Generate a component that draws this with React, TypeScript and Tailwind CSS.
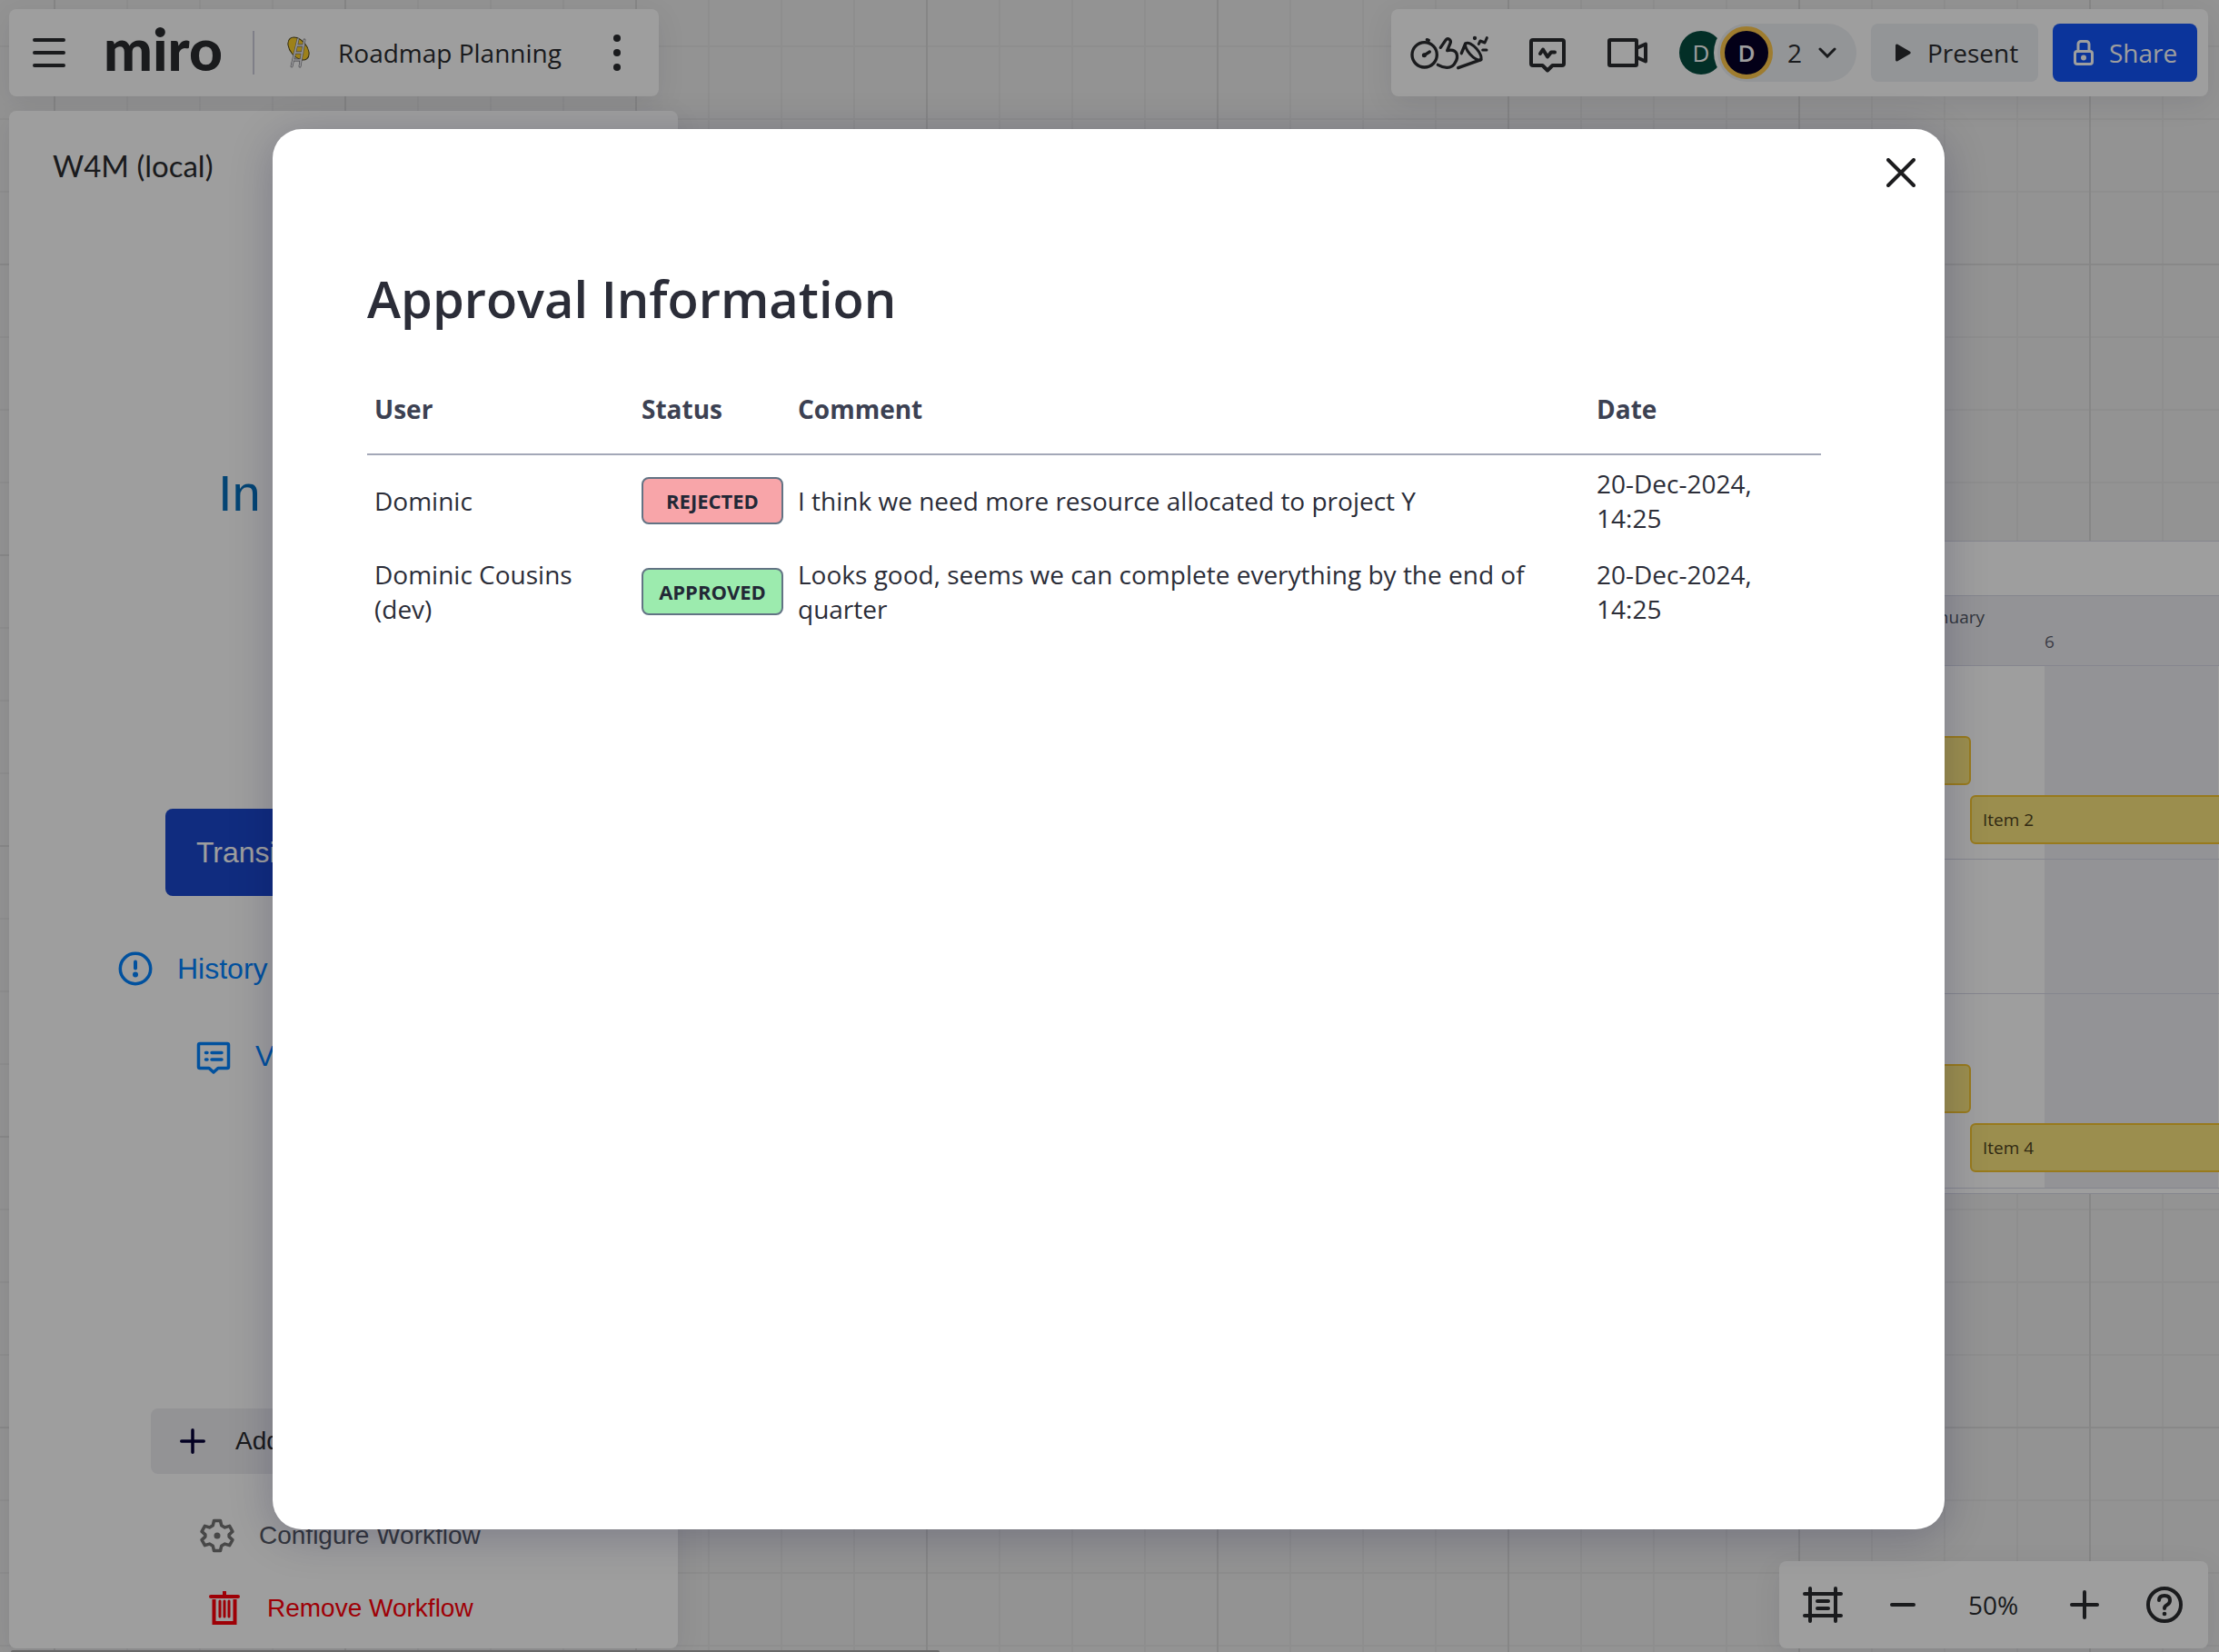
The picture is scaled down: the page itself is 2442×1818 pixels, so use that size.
import { ReactNode } from "react";

type Approval = {
  user: string;
  status: "REJECTED" | "APPROVED";
  comment: string;
  date: string;
};

const approvals: Approval[] = [
  {
    user: "Dominic",
    status: "REJECTED",
    comment: "I think we need more resource allocated to project Y",
    date: "20-Dec-2024, 14:25",
  },
  {
    user: "Dominic Cousins (dev)",
    status: "APPROVED",
    comment:
      "Looks good, seems we can complete everything by the end of quarter",
    date: "20-Dec-2024, 14:25",
  },
];

const statusColors = {
  REJECTED: "bg-[#f8a5a9]",
  APPROVED: "bg-[#9cebae]",
};

const MenuIcon = () => (
  <svg width="36" height="32" viewBox="0 0 36 32" stroke="currentColor" strokeWidth="4" strokeLinecap="round">
    <path d="M2 2h32M2 16h32M2 30h32" />
  </svg>
);

const LadderIcon = () => (
  <svg width="26" height="36" viewBox="0 0 26 36" fill="none">
    <ellipse cx="12.500" cy="13.500" rx="14.500" ry="9" transform="rotate(50 12.500 13.500)" fill="#fdd12a" stroke="#4a4014" strokeWidth="1" />
    <g stroke="#6b6b73" strokeWidth="2.800" strokeLinecap="round">
      <path d="M12 3L5 33M19 4L14 33M11.500 10h7M9.500 18h7.500M8 26h7.500" />
    </g>
    <g stroke="#f0f0f4" strokeWidth="1.600" strokeLinecap="round">
      <path d="M12 3L5 33M19 4L14 33M11.500 10h7M9.500 18h7.500M8 26h7.500" />
    </g>
  </svg>
);

const DotsIcon = () => (
  <svg width="8" height="40" viewBox="0 0 8 40" fill="currentColor">
    <circle cx="4" cy="4" r="4" />
    <circle cx="4" cy="20" r="4" />
    <circle cx="4" cy="36" r="4" />
  </svg>
);

const ReactionsIcon = () => (
  <svg width="90" height="42" viewBox="60 78 270 126" fill="none" stroke="currentColor" strokeWidth="10" strokeLinecap="round" strokeLinejoin="round">
    <circle cx="113" cy="148" r="41" />
    <path d="M121 98l6 2M113 149l17-11" />
    <circle cx="112" cy="149" r="5" fill="currentColor" strokeWidth="5" />
    <path d="M166 124l18-26q7-6 12 0 5 5 2 12l-10 24q24-6 31 10 5 14-4 28-8 18-28 18-14 0-30-9" />
    <path d="M235 143l13-32M300 164l-76 27" />
    <ellipse cx="274" cy="137" rx="36" ry="14" transform="rotate(48 274 137)" strokeWidth="9" />
    <path d="M292 112l5-10 15 6 7-16M305 132h13" strokeWidth="9" />
    <circle cx="279" cy="93" r="3" fill="currentColor" strokeWidth="7" />
  </svg>
);

const ActivityIcon = () => (
  <svg width="40" height="38" viewBox="0 0 40 38" fill="none" stroke="currentColor" strokeWidth="4" strokeLinejoin="round" strokeLinecap="round">
    <path d="M2 4a2 2 0 0 1 2-2h32a2 2 0 0 1 2 2v24a2 2 0 0 1-2 2H25.500L20 35.500 14.500 30H4a2 2 0 0 1-2-2z" />
    <path d="M12 17l3-4.500 5 8 4-5h4" />
  </svg>
);

const VideoIcon = () => (
  <svg width="44" height="32" viewBox="0 0 44 32" fill="none" stroke="currentColor" strokeWidth="4" strokeLinejoin="round">
    <rect x="2" y="2" width="30" height="28" rx="1" />
    <path d="M33 10.500l9-4v19l-9-4" />
  </svg>
);

const LockIcon = () => (
  <svg width="22" height="28" viewBox="0 0 22 28" fill="none" stroke="currentColor" strokeWidth="3">
    <rect x="1.500" y="12.500" width="19" height="14" rx="2.500" />
    <path d="M5 12V4.500a3 3 0 0 1 3-3h6a3 3 0 0 1 3 3V12" />
    <circle cx="11" cy="19.500" r="3" fill="currentColor" stroke="none" />
  </svg>
);

const HistoryIcon = () => (
  <svg width="38" height="38" viewBox="0 0 38 38" fill="none" stroke="currentColor" strokeWidth="3.500" strokeLinecap="round">
    <circle cx="19" cy="19" r="16.700" />
    <path d="M19 11.500v7" strokeWidth="4" />
    <circle cx="19" cy="25.500" r="3" fill="currentColor" stroke="none" />
  </svg>
);

const CommentIcon = () => (
  <svg width="38" height="42" viewBox="0 -4 38 42" fill="none" stroke="currentColor" strokeWidth="3.500" strokeLinecap="round" strokeLinejoin="round">
    <path d="M2.500 5a1.500 1.500 0 0 1 1.500-1.500h30A1.500 1.500 0 0 1 35.500 5v24a1.500 1.500 0 0 1-1.500 1.500H24l-5 4.500-5-4.500H4A1.500 1.500 0 0 1 2.500 29z" />
    <path d="M10.500 13.500h1.500M17 13.500h11M10.500 21h1.500M17 21h11" />
  </svg>
);

const GearIcon = () => (
  <svg width="38" height="38" viewBox="0 0 38 38" fill="none" stroke="#747474" strokeWidth="3.500" strokeLinejoin="round">
    <path d="M15.500 2.500h7l1.200 5.200 3.800 2.200 5.100-1.500 3.300 6-3.800 3.500v2.200l3.800 3.500-3.300 6-5.100-1.500-3.800 2.200-1.200 5.200h-7l-1.200-5.200-3.800-2.200-5.100 1.500-3.300-6 3.800-3.500v-2.200l-3.800-3.500 3.300-6 5.100 1.500 3.800-2.200z" />
    <circle cx="19" cy="19" r="3.500" fill="#747474" stroke="none" />
  </svg>
);

const TrashIcon = () => (
  <svg width="34" height="38" viewBox="0 0 34 38" fill="none" stroke="currentColor" strokeWidth="4">
    <path d="M2 6h30" strokeLinecap="round" />
    <path d="M17 1v5" strokeLinecap="round" />
    <path d="M5.500 9v26h23V9" />
    <path d="M12 11v17M17 11v17M22 11v17" strokeWidth="3" strokeLinecap="round" />
  </svg>
);

const FrameIcon = () => (
  <svg width="44" height="40" viewBox="0 0 44 40" fill="none" stroke="currentColor" strokeWidth="4" strokeLinecap="round">
    <path d="M2 8h40M2 32h40M8 2v36M36 2v36M16 16h12M16 24h12" />
  </svg>
);

const PlusIcon = ({ size }: { size: number }) => (
  <svg width={size} height={size} viewBox="0 0 32 32" stroke="currentColor" strokeWidth="4" strokeLinecap="round">
    <path d="M2 16h28M16 2v28" />
  </svg>
);

const HelpIcon = () => (
  <svg width="40" height="40" viewBox="0 0 40 40" fill="none" stroke="currentColor" strokeWidth="4" strokeLinecap="round">
    <circle cx="20" cy="20" r="18" />
    <path d="M14 15q0-5 6-5t6 5q0 3.500-3 5t-3 4" />
    <circle cx="20" cy="30" r="2.300" fill="currentColor" stroke="none" />
  </svg>
);

const Bar = ({ children, className }: { children: ReactNode; className: string }) => (
  <div
    className={`flex h-24 items-center rounded-lg bg-white shadow-[0_8px_32px_rgba(5,0,56,0.08)] ${className}`}>
    {children}
  </div>
);

const TopBar = () => {
  return (
    <header className="flex justify-between">
      <Bar className="w-[715px] pl-[26px] pr-[42px]">
        <button aria-label="Main menu">
          <MenuIcon />
        </button>
        <a href="#" className="ml-[42px] w-[132px] pb-2 font-[Lato,sans-serif] text-[64px] leading-[64px] font-black">
          miro
        </a>
        <div className="ml-[32px] h-12 w-[2px] bg-[#cdcddb]" />
        <div className="ml-[36px]">
          <LadderIcon />
        </div>
        <h1 className="ml-[30px] text-[28px]">Roadmap Planning</h1>
        <button aria-label="Board options" className="ml-auto">
          <DotsIcon />
        </button>
      </Bar>
      <Bar className="pl-[19px] pr-3">
        <button aria-label="Reactions">
          <ReactionsIcon />
        </button>
        <button aria-label="Activity" className="ml-[43px] pt-[6px]">
          <ActivityIcon />
        </button>
        <button aria-label="Video call" className="ml-[46px]">
          <VideoIcon />
        </button>
        <span className="ml-[35px] flex size-12 items-center justify-center rounded-full bg-[#054d40] text-[26px] font-medium text-white">
          D
        </span>
        <button className="-ml-[6px] flex h-16 w-[153px] items-center rounded-full bg-[#edf0f4] pl-[3px] text-[28px] ring-4 ring-white">
          <span className="flex size-[58px] items-center justify-center rounded-full border-[5px] border-[#ffc94c] bg-[#050028] text-[26px] font-semibold text-white">
            D
          </span>
          <span className="ml-4">2</span>
          <svg className="ml-[18px]" width="20" height="12" viewBox="0 0 20 12" fill="none" stroke="currentColor" strokeWidth="3" strokeLinecap="round">
            <path d="M2 2l8 8 8-8" />
          </svg>
        </button>
        <button className="ml-4 flex h-16 w-[184px] items-center rounded-lg bg-[#edf0f4] pl-[27px] text-[28px]">
          <svg width="17" height="20" viewBox="0 0 17 20" fill="currentColor">
            <path d="M0 2a1.500 1.500 0 0 1 2.300-1.300L16 8.800a1.400 1.400 0 0 1 0 2.400L2.300 19.300A1.500 1.500 0 0 1 0 18z" />
          </svg>
          <span className="ml-[18px]">Present</span>
        </button>
        <button className="ml-4 flex h-16 w-[159px] items-center rounded-lg bg-[#1255fa] pl-[23px] text-[28px] text-white">
          <LockIcon />
          <span className="ml-[17px]">Share</span>
        </button>
      </Bar>
    </header>
  );
};

const WorkflowPanel = () => {
  return (
    <aside className="flex w-[736px] flex-col rounded-lg bg-white pt-10 pb-6 font-['Liberation_Sans',sans-serif] shadow-[0_8px_32px_rgba(5,0,56,0.08)]">
      <h2 className="pl-12 font-[Lato,sans-serif] text-[33px] leading-10">
        W4M (local)
      </h2>
      <p className="mt-[309px] pl-[230px] text-[56px] leading-[64px] text-[#066fbb]">
        In
      </p>
      <button className="mx-auto mt-[315px] h-24 w-[392px] rounded-lg bg-[#1a47cd] pl-[34px] text-left text-[32px] text-white">
        Transition
      </button>
      <button className="mt-[60px] flex h-10 items-center gap-[27px] pl-[120px] text-[32px] text-[#0383ff]">
        <HistoryIcon />
        History
      </button>
      <button className="mt-[56px] flex h-10 items-center gap-[27px] pl-[206px] text-[32px] text-[#0383ff]">
        <CommentIcon />
        View
      </button>
      <button className="mx-auto mt-auto flex h-[72px] w-[424px] items-center gap-[33px] rounded-lg bg-[#ededf1] pl-[32px] text-[28px]">
        <span className="text-[#050038]">
          <PlusIcon size={28} />
        </span>
        Add
      </button>
      <button className="mt-12 flex h-10 items-center gap-[27px] pl-[210px] text-[28px] text-[#555a64]">
        <GearIcon />
        Configure Workflow
      </button>
      <button className="mt-10 flex h-10 items-center gap-[30px] pl-[220px] text-[28px] text-[#ff000a]">
        <TrashIcon />
        Remove Workflow
      </button>
    </aside>
  );
};

const TimelineItem = ({ label, className }: { label?: string; className: string }) => (
  <div
    className={`h-[54px] rounded-md border-2 border-[#f5c52f] bg-[#fae67e] pl-3 text-[19px] leading-[50px] text-[#504320] ${className}`}>
    {label}
  </div>
);

const Timeline = () => {
  return (
    <section className="absolute top-[595px] right-0 left-[1700px] border-y border-[#d7d8e6] bg-white pt-[59px] pb-[5px]">
      <div className="h-[78px] border-y border-[#d7d8e6] bg-[#eeeef2] pt-[10px] text-[19px] leading-[27px]">
        <p className="w-[484px] text-right font-medium text-[#525765]">
          January
        </p>
        <p className="pl-[550px] text-[#5f6270]">6</p>
      </div>
      <div className="bg-[linear-gradient(#eeeef2,#eeeef2)] bg-[length:191px_100%] bg-[position:550px_0] bg-no-repeat">
        <div className="h-[213px] border-b border-[#d7d8e6] pt-[77px]">
          <TimelineItem className="w-[469px]" />
          <TimelineItem label="Item 2" className="mt-[11px] -mr-4 ml-[468px]" />
        </div>
        <div className="h-[148px] border-b border-[#d7d8e6]" />
        <div className="h-[214px] border-b border-[#d7d8e6] pt-[77px]">
          <TimelineItem className="w-[469px]" />
          <TimelineItem label="Item 4" className="mt-[11px] -mr-4 ml-[468px]" />
        </div>
      </div>
    </section>
  );
};

const ZoomBar = () => {
  return (
    <Bar className="w-[472px] self-end pl-[26px]">
      <button aria-label="Frames">
        <FrameIcon />
      </button>
      <button aria-label="Zoom out" className="ml-[52px] h-1 w-7 rounded-full bg-[#2a2c30]" />
      <span className="ml-[58px] text-[28px] font-medium">50%</span>
      <button aria-label="Zoom in" className="ml-[57px]">
        <PlusIcon size={32} />
      </button>
      <button aria-label="Help" className="ml-[52px]">
        <HelpIcon />
      </button>
    </Bar>
  );
};

const ApprovalModal = () => {
  return (
    <div className="absolute inset-0 flex bg-black/38 pt-[142px] pr-[302px] pb-[135px] pl-[300px]">
      <div
        role="dialog"
        aria-labelledby="approval-title"
        className="relative flex-1 rounded-[32px] bg-white pt-[148px] pr-[136px] pl-[104px] text-[#2b2d38] shadow-[0_8px_48px_rgba(5,0,56,0.22)]">
        <button aria-label="Close" className="absolute top-8 right-8 text-[#1c1c1e]">
          <svg width="32" height="32" viewBox="0 0 32 32" stroke="currentColor" strokeWidth="4" strokeLinecap="round">
            <path d="M2 2l28 28M30 2L2 30" />
          </svg>
        </button>
        <h2 id="approval-title" className="text-[56px] leading-[76px] font-semibold">
          Approval Information
        </h2>
        <table className="mt-[34px] w-full table-fixed border-separate border-spacing-0 text-left text-[28px] leading-[38px]">
          <thead className="text-[#3c4152]">
            <tr className="h-[101px]">
              <th className="w-[294px] border-b-2 border-[#a3a8b8] px-2">User</th>
              <th className="w-[172px] border-b-2 border-[#a3a8b8] px-2">Status</th>
              <th className="border-b-2 border-[#a3a8b8] px-2">Comment</th>
              <th className="w-[255px] border-b-2 border-[#a3a8b8] px-2">Date</th>
            </tr>
          </thead>
          <tbody>
            {approvals.map((item) => (
              <tr key={item.user}>
                <td className="px-2 py-3">{item.user}</td>
                <td className="px-2 py-3">
                  <div
                    className={`flex h-[52px] items-center justify-center rounded-lg border-2 border-[#627384] text-[22px] font-bold text-[#222836] ${statusColors[item.status]}`}>
                    {item.status}
                  </div>
                </td>
                <td className="px-2 py-3">{item.comment}</td>
                <td className="px-2 py-3">{item.date}</td>
              </tr>
            ))}
          </tbody>
        </table>
      </div>
    </div>
  );
};

export default function App() {
  return (
    <div className="relative h-screen overflow-hidden bg-[#ededed] font-['Open_Sans',sans-serif] text-[#2a2c30]">
      {/* board grid, every fourth line is darker */}
      <div className="absolute inset-0 bg-[linear-gradient(90deg,#e5e5e5_2px,transparent_2px),linear-gradient(#e5e5e5_2px,transparent_2px)] bg-[size:80px_80px] bg-[position:59px_50px]" />
      <div className="absolute inset-0 bg-[linear-gradient(90deg,#d8d8d8_2px,transparent_2px),linear-gradient(#dcdcdc_2px,transparent_2px)] bg-[size:320px_320px] bg-[position:59px_290px]" />
      <Timeline />
      <div className="relative flex h-full flex-col gap-4 pt-[10px] pr-3 pb-1 pl-[10px]">
        <TopBar />
        <main className="flex flex-1 justify-between">
          <WorkflowPanel />
          <ZoomBar />
        </main>
      </div>
      <div className="absolute bottom-0 left-3 h-[2px] w-[1022px] rounded-t bg-[#a8a8a8]" />
      <ApprovalModal />
    </div>
  );
}
